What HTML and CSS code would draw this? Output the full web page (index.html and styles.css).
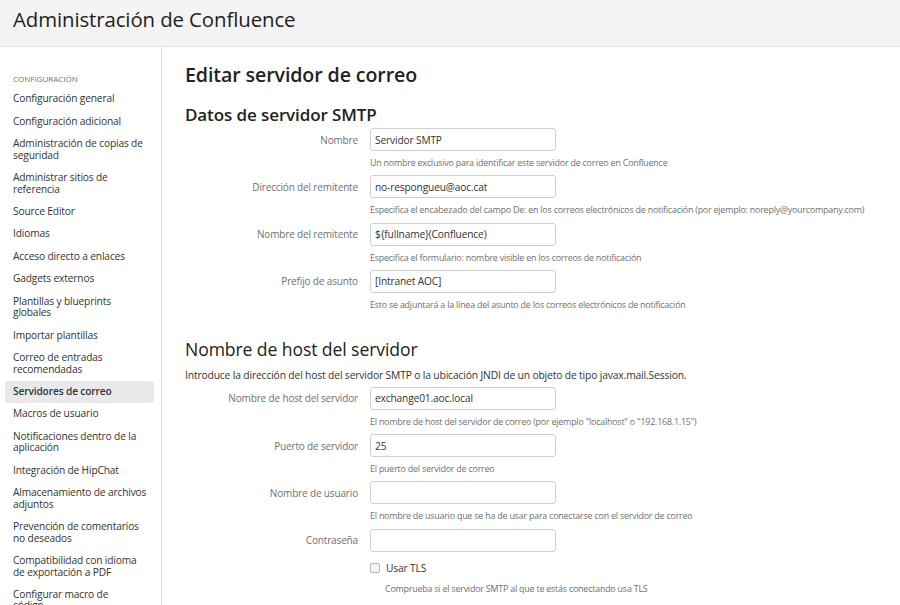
FILE: index.html
```html
<!DOCTYPE html>
<html lang="es">
<head>
<meta charset="utf-8">
<title>Administración de Confluence</title>
<link rel="stylesheet" href="styles.css">
</head>
<body>
<header class="topbar">
  <h1 class="app-title">Administración de Confluence</h1>
</header>
<div class="layout">
  <nav class="sidebar">
    <div class="nav-heading">CONFIGURACIÓN</div>
    <ul class="nav-list">
      <li><a class="nav-item">Configuración general</a></li>
      <li><a class="nav-item">Configuración adicional</a></li>
      <li><a class="nav-item">Administración de copias de seguridad</a></li>
      <li><a class="nav-item">Administrar sitios de referencia</a></li>
      <li><a class="nav-item">Source Editor</a></li>
      <li><a class="nav-item">Idiomas</a></li>
      <li><a class="nav-item">Acceso directo a enlaces</a></li>
      <li><a class="nav-item">Gadgets externos</a></li>
      <li><a class="nav-item">Plantillas y blueprints globales</a></li>
      <li><a class="nav-item">Importar plantillas</a></li>
      <li><a class="nav-item">Correo de entradas recomendadas</a></li>
      <li><a class="nav-item active">Servidores de correo</a></li>
      <li><a class="nav-item">Macros de usuario</a></li>
      <li><a class="nav-item">Notificaciones dentro de la aplicación</a></li>
      <li><a class="nav-item">Integración de HipChat</a></li>
      <li><a class="nav-item">Almacenamiento de archivos adjuntos</a></li>
      <li><a class="nav-item">Prevención de comentarios no deseados</a></li>
      <li><a class="nav-item">Compatibilidad con idioma de exportación a PDF</a></li>
      <li><a class="nav-item">Configurar macro de<br>código</a></li>
    </ul>
  </nav>
  <main class="content">
    <h2 class="page-title">Editar servidor de correo</h2>
    <h3 class="section-title">Datos de servidor SMTP</h3>
    <form class="form">
      <div class="field">
        <label class="field-label">Nombre</label>
        <input class="text-input" type="text" value="Servidor SMTP">
        <div class="field-desc">Un nombre exclusivo para identificar este servidor de correo en Confluence</div>
      </div>
      <div class="field">
        <label class="field-label">Dirección del remitente</label>
        <input class="text-input" type="text" value="no-respongueu@aoc.cat">
        <div class="field-desc">Especifica el encabezado del campo De: en los correos electrónicos de notificación (por ejemplo: noreply@yourcompany.com)</div>
      </div>
      <div class="field">
        <label class="field-label">Nombre del remitente</label>
        <input class="text-input" type="text" value="${fullname}(Confluence)">
        <div class="field-desc">Especifica el formulario: nombre visible en los correos de notificación</div>
      </div>
      <div class="field">
        <label class="field-label">Prefijo de asunto</label>
        <input class="text-input" type="text" value="[Intranet AOC]">
        <div class="field-desc">Esto se adjuntará a la línea del asunto de los correos electrónicos de notificación</div>
      </div>

      <h3 class="section-title second">Nombre de host del servidor</h3>
      <p class="intro">Introduce la dirección del host del servidor SMTP o la ubicación JNDI de un objeto de tipo javax.mail.Session.</p>

      <div class="field">
        <label class="field-label">Nombre de host del servidor</label>
        <input class="text-input" type="text" value="exchange01.aoc.local">
        <div class="field-desc">El nombre de host del servidor de correo (por ejemplo "localhost" o "192.168.1.15")</div>
      </div>
      <div class="field">
        <label class="field-label">Puerto de servidor</label>
        <input class="text-input" type="text" value="25">
        <div class="field-desc">El puerto del servidor de correo</div>
      </div>
      <div class="field">
        <label class="field-label">Nombre de usuario</label>
        <input class="text-input" type="text" value="">
        <div class="field-desc">El nombre de usuario que se ha de usar para conectarse con el servidor de correo</div>
      </div>
      <div class="field">
        <label class="field-label">Contraseña</label>
        <input class="text-input" type="password" value="">
      </div>
      <div class="field check-field">
        <label class="check-label"><span class="checkbox"></span>Usar TLS</label>
        <div class="field-desc indent">Comprueba si el servidor SMTP al que te estás conectando usa TLS</div>
      </div>
    </form>
  </main>
</div>
</body>
</html>
```

FILE: styles.css
```css
* { box-sizing: border-box; }
html, body { margin: 0; padding: 0; }
body {
  font-family: "Open Sans", "Noto Sans", sans-serif;
  color: #333;
  background: #fff;
  width: 900px;
  height: 605px;
  overflow: hidden;
}
.topbar {
  height: 47px;
  background: #f4f4f4;
  border-bottom: 1px solid #e3e3e3;
  display: flex;
  align-items: center;
  padding: 0 13px;
}
.app-title {
  margin: 0;
  font-size: 20.4px;
  font-weight: 400;
  color: #222;
  letter-spacing: -0.1px;
  padding-bottom: 8px;
}
.layout {
  display: flex;
  height: 558px;
}
.sidebar {
  width: 162px;
  flex: none;
  border-right: 1px solid #dcdcdc;
  padding: 27px 7px 0 5px;
}
.nav-heading {
  font-size: 8px;
  color: #707070;
  padding-left: 8px;
  line-height: 10px;
  margin-bottom: 4px;
}
.nav-list {
  list-style: none;
  margin: 0;
  padding: 0;
}
.nav-item {
  display: block;
  font-size: 10.2px;
  line-height: 11.6px;
  padding: 5.4px 7px 5.4px 8px;
  color: #333;
  border-radius: 3px;
  letter-spacing: -0.15px;
}
.nav-item.active {
  background: #e9e9ec;
  font-weight: 600;
}
.content {
  flex: 1;
  padding: 15px 20px 0 23px;
}
.page-title {
  margin: 0;
  font-size: 19.6px;
  font-weight: 600;
  line-height: 26px;
  color: #222;
  letter-spacing: -0.1px;
}
.section-title {
  margin: 16px 0 2px;
  font-size: 17px;
  font-weight: 600;
  line-height: 22px;
  color: #222;
  letter-spacing: -0.1px;
}
.section-title.second {
  margin: 27px 0 0;
  font-size: 17.6px;
  font-weight: 400;
}
.intro {
  margin: 8px 0 5px;
  font-size: 10.3px;
  line-height: 14px;
  color: #333;
  letter-spacing: -0.15px;
}
.form { margin: 0; }
.field {
  display: grid;
  grid-template-columns: 173px 186px;
  column-gap: 12px;
  align-items: center;
  margin-bottom: 6.3px;
}
.field-label {
  grid-column: 1;
  text-align: right;
  font-size: 10px;
  color: #707070;
  letter-spacing: -0.15px;
}
.text-input {
  grid-column: 2;
  height: 23px;
  border: 1px solid #cfcfcf;
  border-radius: 3px;
  padding: 0 4px;
  font-family: inherit;
  font-size: 10.2px;
  color: #333;
  letter-spacing: -0.15px;
  background: #fff;
}
.field-desc {
  grid-column: 2 / span 1;
  white-space: nowrap;
  font-size: 8.9px;
  line-height: 12px;
  margin-top: 6px;
  color: #707070;
  letter-spacing: -0.2px;
}
.field-desc.indent { padding-left: 15px; margin-top: 8px; }
.check-field { margin-top: 9px; }
.check-label {
  grid-column: 2;
  display: flex;
  align-items: center;
  font-size: 10.2px;
  color: #333;
  letter-spacing: -0.15px;
}
.checkbox {
  width: 10px;
  height: 10px;
  border: 1px solid #b5b5b5;
  border-radius: 2px;
  background: #f3f3f3;
  margin-right: 6px;
}
```
